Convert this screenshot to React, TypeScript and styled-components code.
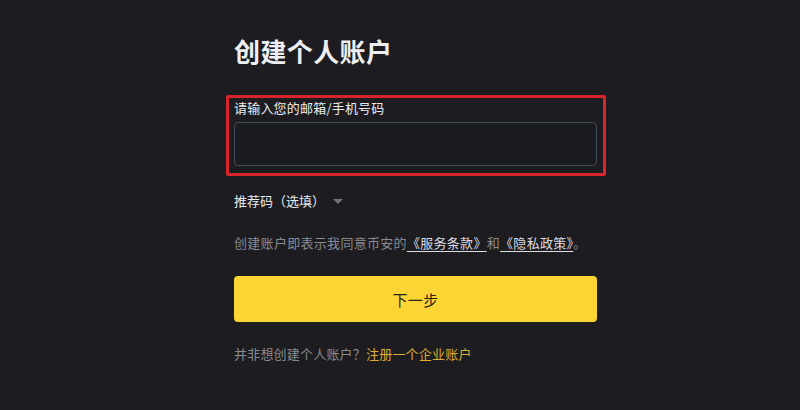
import React from "react";
import styled, { createGlobalStyle } from "styled-components";

const GlobalStyle = createGlobalStyle`
  html, body {
    margin: 0;
    padding: 0;
    background: #1c1c21;
  }
  body {
    font-family: "Noto Sans CJK SC", "Noto Sans", sans-serif;
  }
`;

const Page = styled.div`
  width: 800px;
  height: 410px;
  background: #1c1c21;
  padding: 35px 0 0 234px;
  box-sizing: border-box;
`;

const Form = styled.div`
  width: 363px;
  display: flex;
  flex-direction: column;
`;

const Title = styled.h1`
  margin: 0;
  font-size: 26px;
  line-height: 32px;
  font-weight: 700;
  letter-spacing: 0.4px;
  color: #eceef0;
`;

const FieldGroup = styled.div`
  position: relative;
  margin-top: 32px;
  display: flex;
  flex-direction: column;
  gap: 5px;
`;

const Highlight = styled.div`
  position: absolute;
  top: -4px;
  left: -8px;
  right: -9px;
  bottom: -10px;
  border: 3px solid #d9242b;
  border-radius: 2px;
  pointer-events: none;
`;

const Label = styled.label`
  font-size: 13px;
  line-height: 18px;
  letter-spacing: 0.2px;
  color: #eaecef;
`;

const Input = styled.input`
  height: 44px;
  box-sizing: border-box;
  width: 100%;
  border: 1px solid #474d57;
  border-radius: 4px;
  background: #1b1c22;
  outline: none;
  color: #eaecef;
  font-family: inherit;
  font-size: 14px;
  padding: 0 12px;
`;

const Referral = styled.div`
  margin-top: 26px;
  display: flex;
  align-items: center;
  gap: 8px;
  font-size: 13px;
  line-height: 18px;
  color: #eaecef;
`;

const Caret = styled.span`
  width: 0;
  height: 0;
  border-left: 5px solid transparent;
  border-right: 5px solid transparent;
  border-top: 5px solid #6f737b;
  margin-top: 1px;
`;

const Terms = styled.p`
  margin: 24px 0 0;
  font-size: 13px;
  line-height: 18px;
  letter-spacing: 0.3px;
  color: #8a8b90;
  white-space: nowrap;
`;

const TermsLink = styled.a`
  color: #dcdde0;
  text-decoration: underline;
  text-underline-offset: 3px;
  cursor: pointer;
`;

const NextButton = styled.button`
  margin-top: 24px;
  height: 46px;
  width: 100%;
  border: none;
  border-radius: 4px;
  background: #fcd535;
  color: #2b2418;
  font-family: inherit;
  font-size: 15px;
  letter-spacing: 0.3px;
  cursor: pointer;
`;

const Footer = styled.p`
  margin: 23px 0 0;
  font-size: 13px;
  line-height: 18px;
  letter-spacing: 0.2px;
  color: #8a8b90;
`;

const FooterLink = styled.a`
  color: #deaf2f;
  cursor: pointer;
`;

export default function App() {
  return (
    <>
      <GlobalStyle />
      <Page>
        <Form>
          <Title>创建个人账户</Title>
          <FieldGroup>
            <Highlight />
            <Label>请输入您的邮箱/手机号码</Label>
            <Input type="text" />
          </FieldGroup>
          <Referral>
            <span>推荐码（选填）</span>
            <Caret />
          </Referral>
          <Terms>
            创建账户即表示我同意币安的<TermsLink>《服务条款》</TermsLink>和<TermsLink>《隐私政策》</TermsLink>。
          </Terms>
          <NextButton>下一步</NextButton>
          <Footer>
            并非想创建个人账户？<FooterLink>注册一个企业账户</FooterLink>
          </Footer>
        </Form>
      </Page>
    </>
  );
}
